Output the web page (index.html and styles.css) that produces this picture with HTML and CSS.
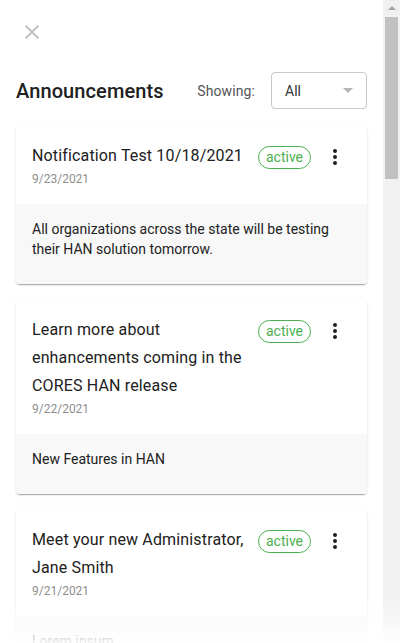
FILE: index.html
```html
<!DOCTYPE html>
<html lang="en">
<head>
<meta charset="utf-8">
<title>Announcements</title>
<link rel="stylesheet" href="styles.css">
</head>
<body>
<div class="frame">
  <div class="main">
    <div class="topbar">
      <button class="close" aria-label="Close">
        <svg viewBox="0 0 24 24" width="24" height="24"><path d="M19 6.41L17.59 5 12 10.59 6.41 5 5 6.41 10.59 12 5 17.59 6.41 19 12 13.41 17.59 19 19 17.59 13.41 12z"/></svg>
      </button>
    </div>
    <div class="heading-row">
      <h1 class="heading">Announcements</h1>
      <div class="filter">
        <span class="filter-label">Showing:</span>
        <div class="select">
          <span class="select-value">All</span>
          <span class="select-caret"></span>
        </div>
      </div>
    </div>

    <div class="list">
      <div class="card">
        <div class="card-head">
          <div class="card-titles">
            <div class="card-title">Notification Test 10/18/2021</div>
            <div class="card-date">9/23/2021</div>
          </div>
          <span class="badge">active</span>
          <span class="kebab"><svg viewBox="0 0 24 24" width="24" height="24"><circle cx="12" cy="6" r="2"/><circle cx="12" cy="12" r="2"/><circle cx="12" cy="18" r="2"/></svg></span>
        </div>
        <div class="card-body">All organizations across the state will be testing their HAN solution tomorrow.</div>
      </div>

      <div class="card">
        <div class="card-head">
          <div class="card-titles">
            <div class="card-title">Learn more about enhancements coming in the CORES HAN release</div>
            <div class="card-date">9/22/2021</div>
          </div>
          <span class="badge">active</span>
          <span class="kebab"><svg viewBox="0 0 24 24" width="24" height="24"><circle cx="12" cy="6" r="2"/><circle cx="12" cy="12" r="2"/><circle cx="12" cy="18" r="2"/></svg></span>
        </div>
        <div class="card-body">New Features in HAN</div>
      </div>

      <div class="card">
        <div class="card-head">
          <div class="card-titles">
            <div class="card-title">Meet your new Administrator, Jane Smith</div>
            <div class="card-date">9/21/2021</div>
          </div>
          <span class="badge">active</span>
          <span class="kebab"><svg viewBox="0 0 24 24" width="24" height="24"><circle cx="12" cy="6" r="2"/><circle cx="12" cy="12" r="2"/><circle cx="12" cy="18" r="2"/></svg></span>
        </div>
        <div class="card-body">Lorem ipsum</div>
      </div>
    </div>
  </div>
  <div class="scrollbar">
    <div class="scroll-arrow"></div>
    <div class="scroll-thumb"></div>
  </div>
  <div class="fade"></div>
</div>
</body>
</html>
```
FILE: styles.css
```css
* { box-sizing: border-box; }
html, body { margin: 0; padding: 0; background: #fff; }
body {
  font-family: Roboto, "Liberation Sans", Arial, sans-serif;
  color: #212121;
  width: 400px;
  height: 643px;
  overflow: hidden;
}
.frame {
  position: relative;
  display: flex;
  width: 400px;
  height: 643px;
  overflow: hidden;
}
.main {
  flex: 1;
  padding: 0 16px;
  overflow: hidden;
}
.topbar {
  padding: 20px 0 0 4px;
  height: 72px;
}
.close {
  border: 0;
  background: none;
  padding: 0;
  width: 24px;
  height: 24px;
  display: block;
}
.close svg { fill: #c2c2c2; display: block; }
.heading-row {
  display: flex;
  align-items: center;
  justify-content: space-between;
  height: 37px;
}
.heading {
  margin: 0;
  font-size: 20px;
  font-weight: 500;
  letter-spacing: 0.1px;
  color: #212121;
}
.filter {
  display: flex;
  align-items: center;
  gap: 16px;
}
.filter-label {
  font-size: 14px;
  letter-spacing: 0.1px;
  color: #555;
}
.select {
  width: 96px;
  height: 37px;
  border: 1px solid #c8c8c8;
  border-radius: 4px;
  display: flex;
  align-items: center;
  justify-content: space-between;
  padding: 0 13px 0 13px;
}
.select-value { font-size: 14px; color: #333; }
.select-caret {
  width: 0;
  height: 0;
  border-left: 5px solid transparent;
  border-right: 5px solid transparent;
  border-top: 5px solid #b5b5b5;
}
.list {
  display: flex;
  flex-direction: column;
  gap: 16px;
  padding-top: 17px;
}
.card {
  background: #fff;
  border-radius: 4px;
  box-shadow: 0 2px 1px -1px rgba(0,0,0,0.2), 0 1px 1px 0 rgba(0,0,0,0.12), 0 1px 3px 0 rgba(0,0,0,0.1);
  overflow: hidden;
}
.card-head {
  display: flex;
  align-items: flex-start;
  padding: 16px 20px 18px 16px;
}
.card-titles {
  flex: 1;
  min-width: 0;
  padding-right: 14px;
}
.card-title {
  font-size: 16px;
  line-height: 28px;
  letter-spacing: 0.15px;
  color: #212121;
}
.card-date {
  font-size: 12px;
  line-height: 16px;
  padding-top: 1px;
  color: #8e8e8e;
}
.badge {
  flex: none;
  margin-top: 4px;
  border: 1px solid #4caf50;
  border-radius: 12px;
  color: #4caf50;
  font-size: 14px;
  line-height: 21px;
  padding: 0 7px;
}
.kebab {
  flex: none;
  margin-left: 12px;
  margin-top: 3px;
  width: 24px;
  height: 24px;
}
.kebab svg { display: block; fill: #212121; }
.card-body {
  background: #f8f8f8;
  margin-top: -1px;
  padding: 15px 16px 25px;
  font-size: 14px;
  line-height: 20px;
  color: #212121;
}
.scrollbar {
  flex: none;
  width: 17px;
  height: 643px;
  background: #f1f1f1;
  display: flex;
  flex-direction: column;
  align-items: center;
}
.scroll-arrow {
  margin-top: 6px;
  width: 0;
  height: 0;
  border-left: 4px solid transparent;
  border-right: 4px solid transparent;
  border-bottom: 4px solid #a3a3a3;
}
.scroll-thumb {
  margin-top: 7px;
  width: 13px;
  height: 162px;
  background: #c1c1c1;
}
.fade {
  position: absolute;
  left: 0;
  right: 0;
  bottom: 0;
  height: 48px;
  background: linear-gradient(to bottom, rgba(255,255,255,0), rgba(255,255,255,0.92));
  pointer-events: none;
}
```
